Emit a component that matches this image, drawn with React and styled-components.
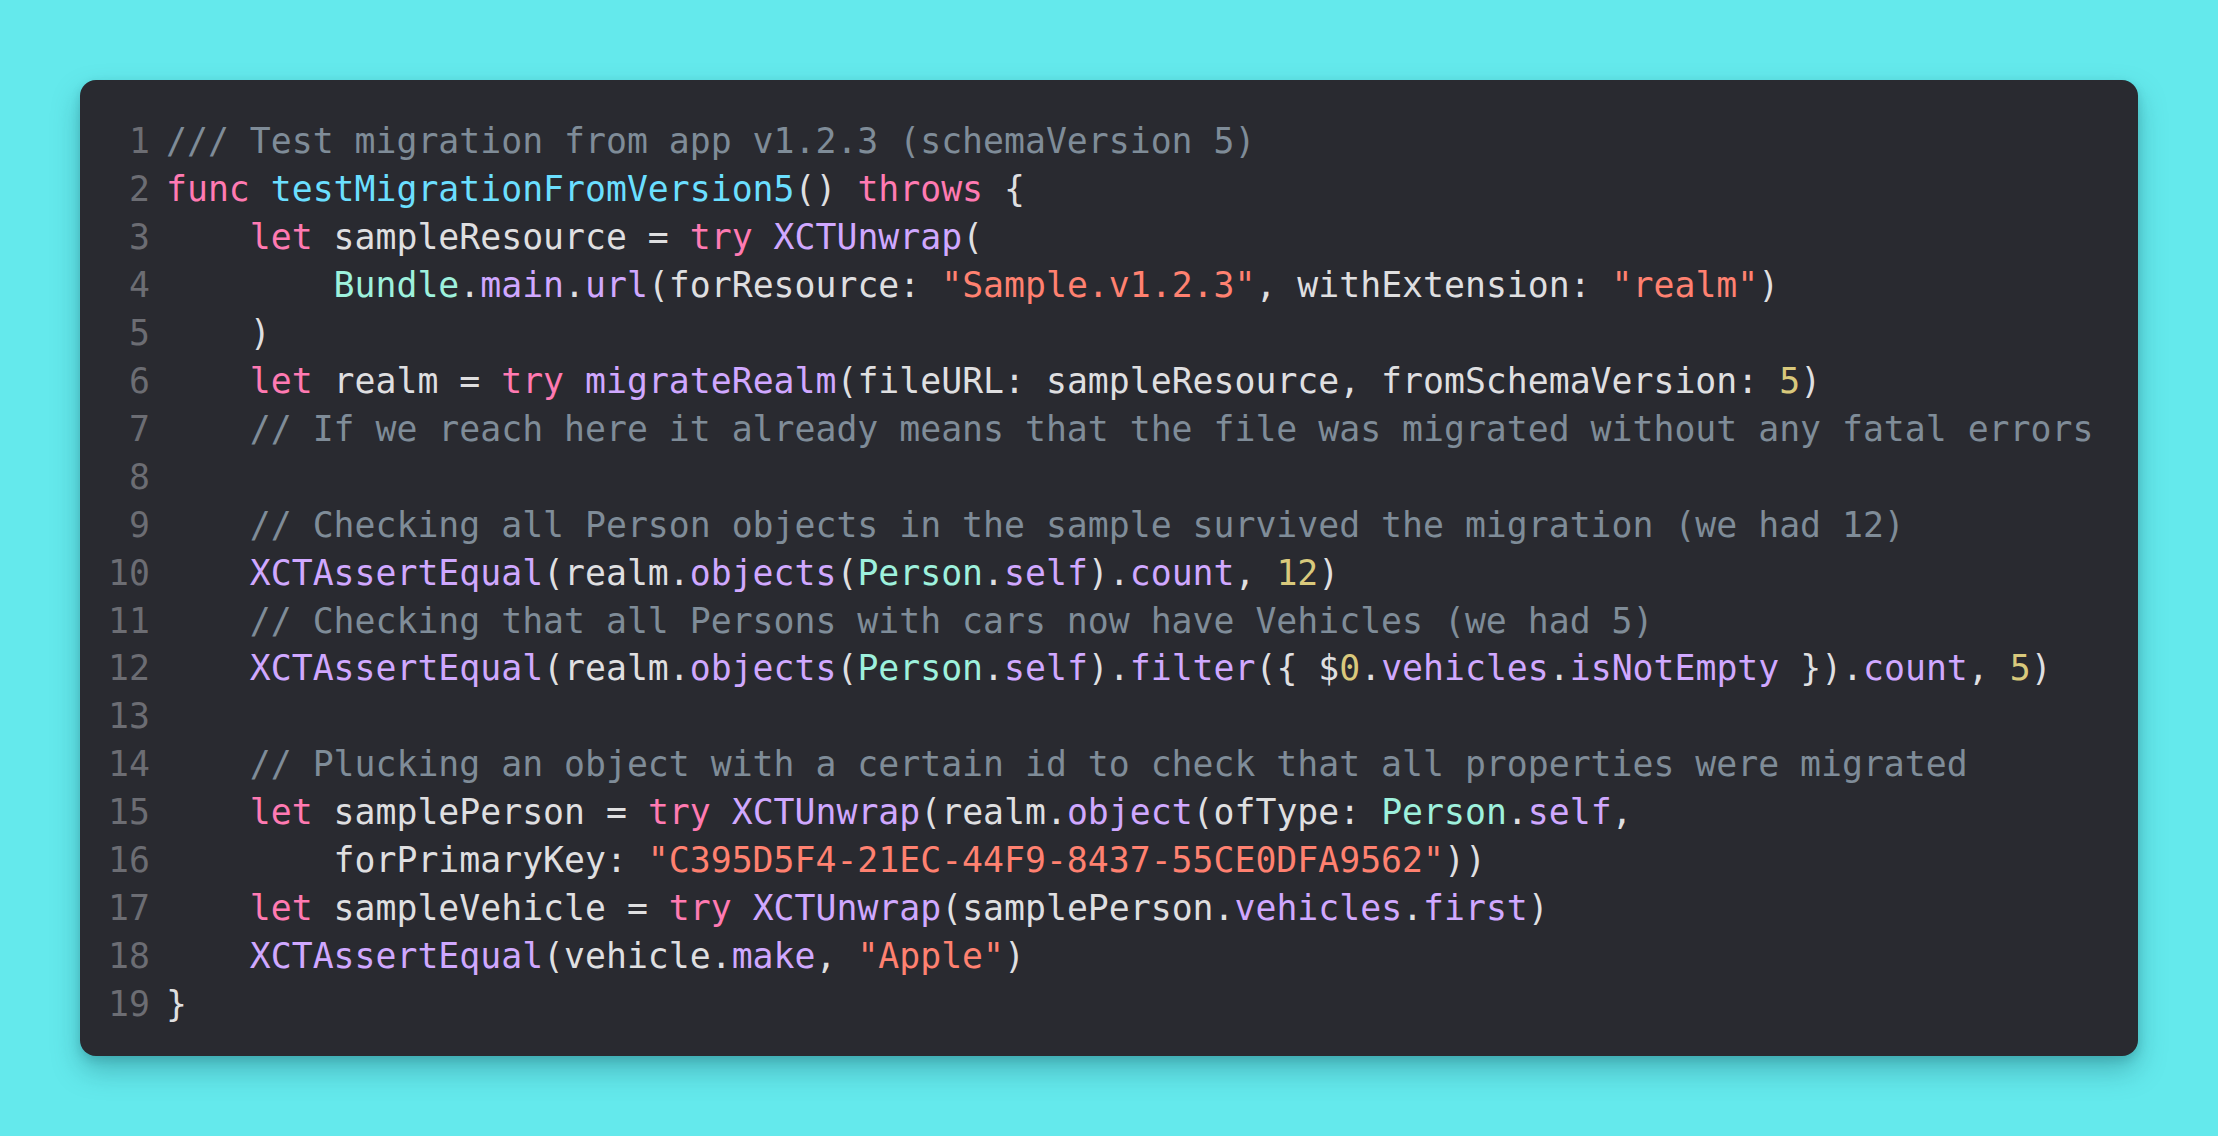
import React from "react";
import styled, { createGlobalStyle } from "styled-components";

const GlobalStyle = createGlobalStyle`
  html, body {
    margin: 0;
    padding: 0;
    background: #64e9ec;
  }
  body {
    font-family: "DejaVu Sans Mono", "Liberation Mono", monospace;
  }
`;

const Page = styled.main`
  min-height: 1136px;
  padding: 80px 0;
  box-sizing: border-box;
  background: #64e9ec;
`;

const Card = styled.section`
  width: 2058px;
  margin: 0 auto;
  box-sizing: border-box;
  padding: 38px 28px 27px 28px;
  background: #292a30;
  border-radius: 16px;
  box-shadow: 0 14px 28px rgba(20, 90, 100, 0.35), 0 4px 10px rgba(20, 90, 100, 0.2);
`;

const Code = styled.div`
  display: grid;
  grid-template-columns: 42px 1fr;
  column-gap: 16px;
  font-family: "DejaVu Sans Mono", "Liberation Mono", monospace;
  font-size: 34.8px;
  line-height: 47.95px;
`;

const LineNo = styled.span`
  text-align: right;
  color: #6c6d73;
  white-space: pre;
`;

const LineText = styled.span`
  white-space: pre;
  color: #dfdfe0;
  min-height: 47.95px;
`;

const colors = {
  plain: "#dfdfe0",
  kw: "#ff7ab2",
  com: "#7f8c98",
  str: "#ff8170",
  num: "#d9c97c",
  decl: "#6bdfff",
  type: "#9ef1dd",
  fn: "#d0a8ff",
};

const Tok = styled.span`
  color: ${(p) => colors[p.$k] || colors.plain};
`;

const P = (t) => ["plain", t];
const K = (t) => ["kw", t];
const C = (t) => ["com", t];
const S = (t) => ["str", t];
const N = (t) => ["num", t];
const D = (t) => ["decl", t];
const T = (t) => ["type", t];
const F = (t) => ["fn", t];

const lines = [
  [C("/// Test migration from app v1.2.3 (schemaVersion 5)")],
  [K("func"), P(" "), D("testMigrationFromVersion5"), P("() "), K("throws"), P(" {")],
  [P("    "), K("let"), P(" sampleResource = "), K("try"), P(" "), F("XCTUnwrap"), P("(")],
  [
    P("        "),
    T("Bundle"),
    P("."),
    F("main"),
    P("."),
    F("url"),
    P("(forResource: "),
    S('"Sample.v1.2.3"'),
    P(", withExtension: "),
    S('"realm"'),
    P(")"),
  ],
  [P("    )")],
  [
    P("    "),
    K("let"),
    P(" realm = "),
    K("try"),
    P(" "),
    F("migrateRealm"),
    P("(fileURL: sampleResource, fromSchemaVersion: "),
    N("5"),
    P(")"),
  ],
  [P("    "), C("// If we reach here it already means that the file was migrated without any fatal errors")],
  [],
  [P("    "), C("// Checking all Person objects in the sample survived the migration (we had 12)")],
  [
    P("    "),
    F("XCTAssertEqual"),
    P("(realm."),
    F("objects"),
    P("("),
    T("Person"),
    P("."),
    F("self"),
    P(")."),
    F("count"),
    P(", "),
    N("12"),
    P(")"),
  ],
  [P("    "), C("// Checking that all Persons with cars now have Vehicles (we had 5)")],
  [
    P("    "),
    F("XCTAssertEqual"),
    P("(realm."),
    F("objects"),
    P("("),
    T("Person"),
    P("."),
    F("self"),
    P(")."),
    F("filter"),
    P("({ $"),
    N("0"),
    P("."),
    F("vehicles"),
    P("."),
    F("isNotEmpty"),
    P(" })."),
    F("count"),
    P(", "),
    N("5"),
    P(")"),
  ],
  [],
  [P("    "), C("// Plucking an object with a certain id to check that all properties were migrated")],
  [
    P("    "),
    K("let"),
    P(" samplePerson = "),
    K("try"),
    P(" "),
    F("XCTUnwrap"),
    P("(realm."),
    F("object"),
    P("(ofType: "),
    T("Person"),
    P("."),
    F("self"),
    P(","),
  ],
  [P("        forPrimaryKey: "), S('"C395D5F4-21EC-44F9-8437-55CE0DFA9562"'), P("))")],
  [
    P("    "),
    K("let"),
    P(" sampleVehicle = "),
    K("try"),
    P(" "),
    F("XCTUnwrap"),
    P("(samplePerson."),
    F("vehicles"),
    P("."),
    F("first"),
    P(")"),
  ],
  [P("    "), F("XCTAssertEqual"), P("(vehicle."), F("make"), P(", "), S('"Apple"'), P(")")],
  [P("}")],
];

export default function App() {
  return (
    <>
      <GlobalStyle />
      <Page>
        <Card>
          <Code>
            {lines.map((toks, i) => (
              <React.Fragment key={i}>
                <LineNo>{i + 1}</LineNo>
                <LineText>
                  {toks.map(([k, t], j) => (
                    <Tok key={j} $k={k}>
                      {t}
                    </Tok>
                  ))}
                </LineText>
              </React.Fragment>
            ))}
          </Code>
        </Card>
      </Page>
    </>
  );
}
